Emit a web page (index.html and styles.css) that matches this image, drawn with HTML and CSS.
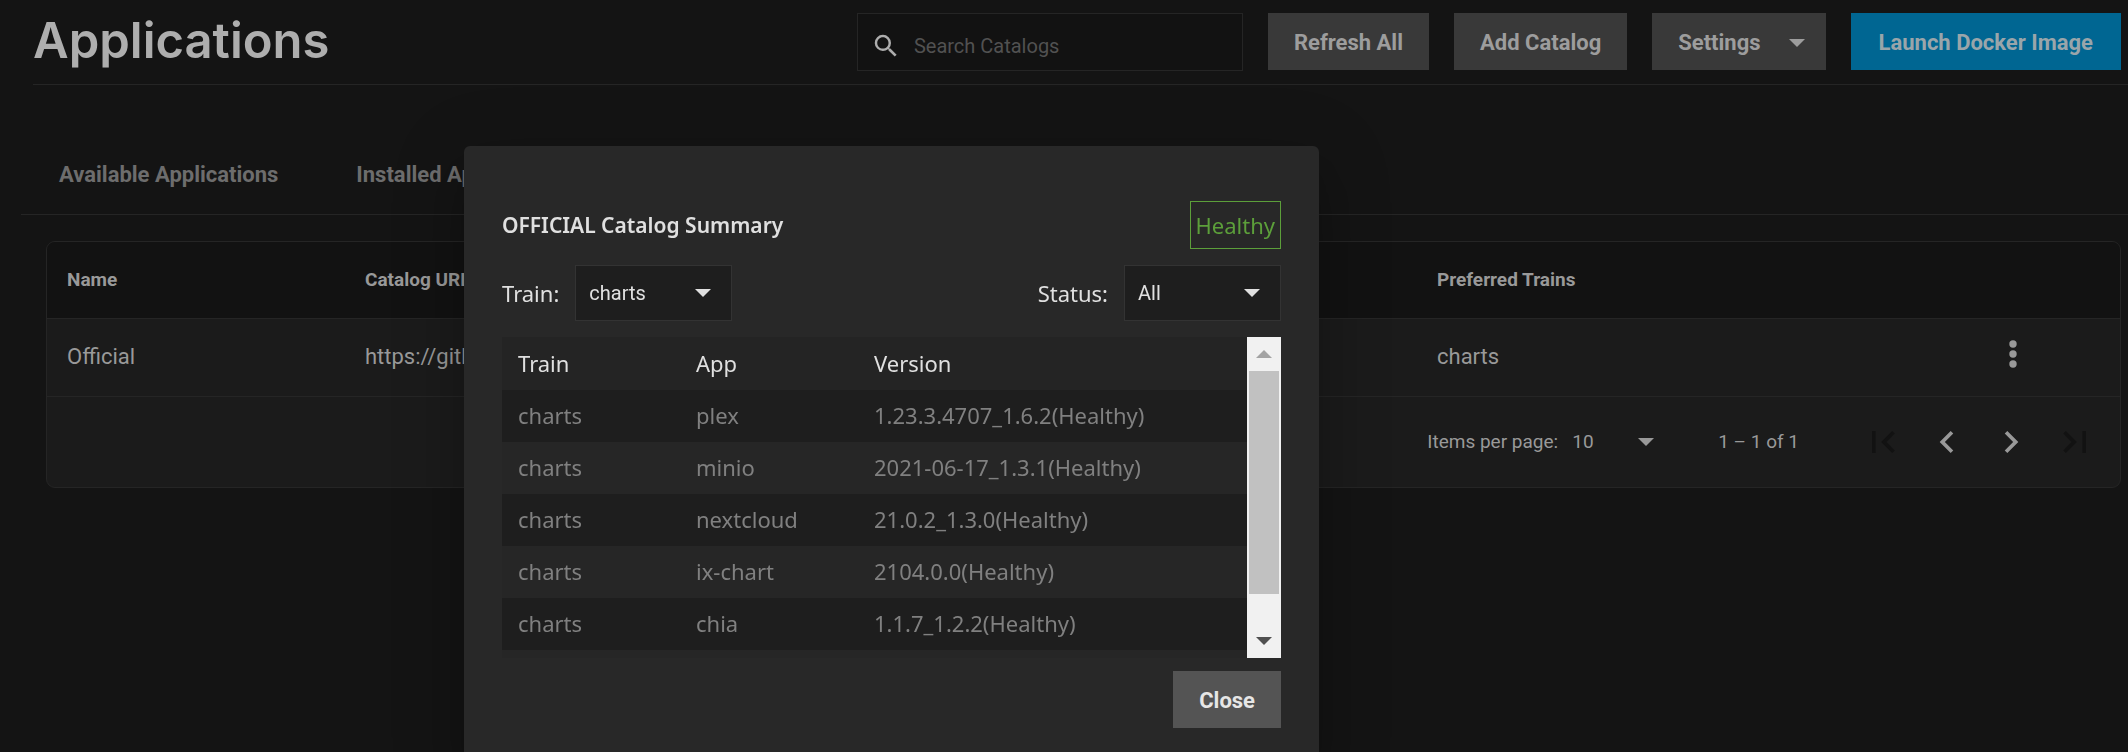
FILE: index.html
```html
<!DOCTYPE html>
<html lang="en">
<head>
<meta charset="utf-8">
<title>Applications</title>
<link rel="stylesheet" href="styles.css">
</head>
<body>
<div class="page">
  <header class="topbar">
    <h1 class="page-title">Applications</h1>
    <div class="actions">
      <label class="search">
        <svg class="search-icon" viewBox="0 0 24 24" aria-hidden="true"><path d="M15.5 14h-.79l-.28-.27A6.47 6.47 0 0 0 16 9.5 6.5 6.5 0 1 0 9.5 16c1.61 0 3.09-.59 4.23-1.57l.27.28v.79l5 4.99L20.49 19l-4.99-5zm-6 0C7.01 14 5 11.99 5 9.5S7.01 5 9.5 5 14 7.01 14 9.5 11.99 14 9.5 14z"/></svg>
        <input class="search-input" type="text" placeholder="Search Catalogs" aria-label="Search Catalogs">
      </label>
      <button class="btn" type="button">Refresh All</button>
      <button class="btn" type="button">Add Catalog</button>
      <button class="btn btn-menu" type="button">Settings
        <svg class="caret" viewBox="0 0 16 8" aria-hidden="true"><path d="M0 0h16L8 8z"/></svg>
      </button>
      <button class="btn btn-primary" type="button">Launch Docker Image</button>
    </div>
  </header>

  <nav class="tabs">
    <a class="tab" href="#available">Available Applications</a>
    <a class="tab" href="#installed">Installed Applications</a>
  </nav>

  <main class="card">
    <table class="catalogs">
      <colgroup><col class="col-name"><col class="col-url"><col class="col-trains"><col class="col-menu"></colgroup>
      <thead>
        <tr><th>Name</th><th>Catalog URL</th><th>Preferred Trains</th><th></th></tr>
      </thead>
      <tbody>
        <tr>
          <td>Official</td>
          <td>https://github.com/truenas/charts.git</td>
          <td>charts</td>
          <td class="menu-cell">
            <button class="icon-btn" type="button" aria-label="Options">
              <svg class="dots" viewBox="0 0 8 28" aria-hidden="true"><circle cx="4" cy="4" r="3.7"/><circle cx="4" cy="14" r="3.7"/><circle cx="4" cy="24" r="3.7"/></svg>
            </button>
          </td>
        </tr>
      </tbody>
    </table>
    <div class="paginator">
      <label for="page-size">Items per page:</label>
      <span class="page-size">
        <select id="page-size"><option>10</option></select>
        <svg class="caret" viewBox="0 0 16 8" aria-hidden="true"><path d="M0 0h16L8 8z"/></svg>
      </span>
      <span class="range">1 – 1 of 1</span>
      <div class="pager">
        <button class="icon-btn pager-btn" type="button" aria-label="First page" disabled><svg viewBox="0 0 24 24"><path d="M18.41 16.59 13.82 12l4.59-4.59L17 6l-6 6 6 6zM6 6h2v12H6z"/></svg></button>
        <button class="icon-btn pager-btn" type="button" aria-label="Previous page"><svg viewBox="0 0 24 24"><path d="M15.41 7.41 14 6l-6 6 6 6 1.41-1.41L10.83 12z"/></svg></button>
        <button class="icon-btn pager-btn" type="button" aria-label="Next page"><svg viewBox="0 0 24 24"><path d="M10 6 8.59 7.41 13.17 12l-4.58 4.59L10 18l6-6z"/></svg></button>
        <button class="icon-btn pager-btn" type="button" aria-label="Last page" disabled><svg viewBox="0 0 24 24"><path d="M5.59 7.41 10.18 12l-4.59 4.59L7 18l6-6-6-6zM16 6h2v12h-2z"/></svg></button>
      </div>
    </div>
  </main>
</div>

<div class="overlay">
  <section class="dialog" role="dialog" aria-labelledby="dialog-title">
    <div class="dialog-head">
      <h2 class="dialog-title" id="dialog-title">OFFICIAL Catalog Summary</h2>
      <span class="badge">Healthy</span>
    </div>
    <div class="filters">
      <div class="filter">
        <label for="train">Train:</label>
        <span class="select">
          <select id="train"><option>charts</option></select>
          <svg class="caret" viewBox="0 0 16 8" aria-hidden="true"><path d="M0 0h16L8 8z"/></svg>
        </span>
      </div>
      <div class="filter">
        <label for="status">Status:</label>
        <span class="select">
          <select id="status"><option>All</option></select>
          <svg class="caret" viewBox="0 0 16 8" aria-hidden="true"><path d="M0 0h16L8 8z"/></svg>
        </span>
      </div>
    </div>
    <div class="list">
      <div class="list-view">
        <table class="apps">
          <colgroup><col class="col-train"><col class="col-app"><col></colgroup>
          <thead><tr><th>Train</th><th>App</th><th>Version</th></tr></thead>
          <tbody>
            <tr><td>charts</td><td>plex</td><td>1.23.3.4707_1.6.2(Healthy)</td></tr>
            <tr><td>charts</td><td>minio</td><td>2021-06-17_1.3.1(Healthy)</td></tr>
            <tr><td>charts</td><td>nextcloud</td><td>21.0.2_1.3.0(Healthy)</td></tr>
            <tr><td>charts</td><td>ix-chart</td><td>2104.0.0(Healthy)</td></tr>
            <tr><td>charts</td><td>chia</td><td>1.1.7_1.2.2(Healthy)</td></tr>
          </tbody>
        </table>
      </div>
      <div class="scrollbar" aria-hidden="true">
        <div class="scroll-end"><svg class="caret scroll-up" viewBox="0 0 16 8"><path d="M8 0l8 8H0z"/></svg></div>
        <div class="scroll-track"><div class="scroll-thumb"></div></div>
        <div class="scroll-end"><svg class="caret scroll-down" viewBox="0 0 16 8"><path d="M0 0h16L8 8z"/></svg></div>
      </div>
    </div>
    <div class="dialog-foot">
      <button class="btn btn-close" type="button">Close</button>
    </div>
  </section>
</div>
</body>
</html>
```

FILE: styles.css
```css
* { box-sizing: border-box; }

body {
  margin: 0;
  height: 100vh;
  overflow: hidden;
  background: #141414;
  color: #999;
  font-family: Roboto, sans-serif;
  font-size: 20px;
}

h1, h2 { margin: 0; }
button, input, select { font: inherit; color: inherit; }
select { appearance: none; border: 0; background: transparent; outline: 0; }
svg { display: block; fill: currentColor; flex: none; }
.caret { width: 16px; height: 8px; }

/* Top bar */
.topbar {
  display: flex;
  justify-content: space-between;
  align-items: flex-start;
  height: 85px;
  margin-left: 33px;
  padding: 13px 7px 0 0;
  border-bottom: 1px solid #252525;
}
.page-title {
  font: 600 49px/56px Inter, sans-serif;
  color: #aeaeae;
}
.actions { display: flex; gap: 25px; }
.search {
  display: flex;
  align-items: center;
  gap: 13px;
  width: 386px;
  height: 58px;
  padding: 7px 13px 0;
  border: 1px solid #252525;
  background: #121212;
}
.search-icon { width: 30px; height: 30px; color: #adadad; }
.search-input {
  flex: 1;
  min-width: 0;
  padding: 0;
  border: 0;
  outline: 0;
  background: transparent;
}
.search-input::placeholder { color: #515151; opacity: 1; }

.btn {
  height: 57px;
  padding: 3px 26px 0;
  border: 0;
  background: #393939;
  color: #9d9d9d;
  font: 700 22px/30px Roboto, sans-serif;
  white-space: nowrap;
}
.btn-menu { display: flex; align-items: center; gap: 28px; padding-right: 21px; }
.btn-primary { padding: 3px 28px 0; background: #006692; color: #9aa5aa; }

/* Tabs */
.tabs {
  display: flex;
  gap: 78px;
  margin-left: 21px;
  padding: 75px 38px 24px;
  border-bottom: 1px solid #252525;
}
.tab {
  color: #6d6d6d;
  font-size: 22px;
  font-weight: 700;
  line-height: 30px;
  text-decoration: none;
}

/* Catalog table */
.card {
  margin: 26px 7px 0 46px;
  border: 1px solid #252525;
  border-radius: 9px;
  background: #1b1b1b;
  overflow: hidden;
}
.catalogs { width: 100%; table-layout: fixed; border-collapse: collapse; }
.col-name { width: 298px; }
.col-url { width: 1072px; }
.col-menu { width: 220px; }
.catalogs th, .catalogs td {
  height: 78px;
  padding: 0 20px 2px;
  border-bottom: 1px solid #252525;
  text-align: left;
}
.catalogs th { height: 76px; padding-bottom: 0; background: #121212; font-size: 19px; font-weight: 700; }
.catalogs td { font-size: 22px; }
.icon-btn { padding: 0; border: 0; background: transparent; display: flex; align-items: center; justify-content: center; }
.dots { width: 8px; height: 28px; }
.catalogs .menu-cell { padding: 0 0 6px 109px; }

.paginator {
  display: flex;
  align-items: center;
  justify-content: flex-end;
  height: 90px;
  padding-right: 13px;
  font-size: 19px;
}
.page-size { display: flex; align-items: center; margin: 0 64px 0 14px; }
.page-size select { width: 66px; padding: 0; }
.range { margin-right: 52px; }
.pager { display: flex; }
.pager-btn { width: 64px; height: 60px; }
.pager-btn svg { width: 44px; height: 44px; }
.pager-btn:disabled { color: #121212; }

/* Dialog */
.overlay {
  position: fixed;
  inset: 146px 0 0 464px;
}
.dialog {
  width: 855px;
  padding: 55px 38px 38px;
  border-radius: 6px;
  background: #282828;
  color: #e0e0e0;
  font: 22px/30px "Noto Sans", sans-serif;
  box-shadow: 0 16px 22px -10px rgba(0,0,0,.2), 0 36px 57px 4px rgba(0,0,0,.14), 0 14px 69px 12px rgba(0,0,0,.12);
}
.dialog-head, .filters { display: flex; justify-content: space-between; align-items: center; }
.dialog-title { font: 600 21px/30px "Noto Sans", sans-serif; }
.badge {
  height: 48px;
  padding: 8px 5px;
  border: 1px solid #5c9f3a;
  color: #5c9f3a;
}
.filters { margin: 16px 0; }
.filter { display: flex; align-items: center; gap: 16px; }
.select {
  display: flex;
  align-items: center;
  width: 157px;
  height: 56px;
  padding: 0 20px 0 13px;
  border: 1px solid #333;
  background: #1e1e1e;
  font: 20px/30px Roboto, sans-serif;
}
.select select { flex: 1; min-width: 0; padding: 0; }

.list { display: flex; height: 321px; background: #262626; }
.list-view { flex: 1; overflow: hidden; }
.apps { width: 100%; table-layout: fixed; border-collapse: collapse; }
.col-train, .col-app { width: 178px; }
.apps th, .apps td { height: 52px; padding: 0 16px 2px; text-align: left; font-weight: 400; }
.apps th { height: 53px; background: #242424; }
.apps td { color: #808080; }
.apps tbody tr:nth-child(odd) { background: #1e1e1e; }

.scrollbar { display: flex; flex-direction: column; width: 34px; background: #f1f1f1; }
.scroll-end { display: flex; align-items: center; justify-content: center; height: 34px; }
.scroll-track { flex: 1; padding: 0 2px; }
.scroll-thumb { height: 223px; background: #c1c1c1; }
.scroll-up { color: #a3a3a3; }
.scroll-down { color: #505050; }

.dialog-foot { display: flex; justify-content: flex-end; margin-top: 13px; }
.btn-close { background: #545454; color: #e6e6e6; }
```
